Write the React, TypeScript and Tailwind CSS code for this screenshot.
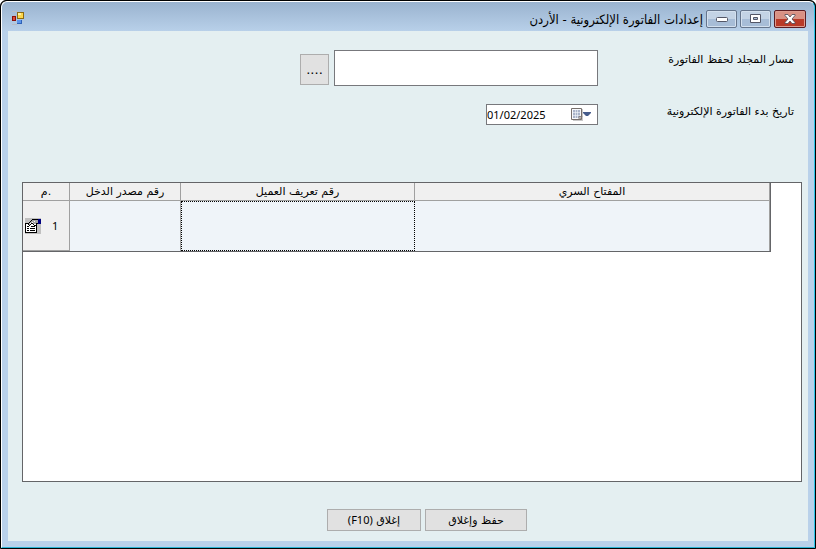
import { useState } from "react";

const columns = [
    { title: "م.", width: "w-[47px]" },
    { title: "رقم مصدر الدخل", width: "w-[111px]" },
    { title: "رقم تعريف العميل", width: "w-[234px]" },
    { title: "المفتاح السري", width: "" },
];

function AppIcon() {
    return (
        <svg width="16" height="16" viewBox="0 0 16 16" shapeRendering="crispEdges">
            <path d="M0 0h6v1H0zM2 4h3v1H2zM0 13h5v1H0z" fill="#b9bcc4" />
            <path d="M5 1h7v7H5z" fill="#8d6a10" />
            <path d="M6 2h5v5H6z" fill="#fbd64c" />
            <path d="M6 2h3v2H6z" fill="#fff0a0" />
            <path d="M0 5h4v5H0z" fill="#8c0f0a" />
            <path d="M1 6h2v3H1z" fill="#dc4a35" />
            <path d="M5 9h5v4H5z" fill="#2f62b8" />
            <path d="M5 9h4v3H5z" fill="#5b94ea" />
        </svg>
    );
}

function RowIcon() {
    return (
        <svg width="16" height="16" viewBox="0 0 16 16" shapeRendering="crispEdges">
            <path d="M0 0h16v16H0z" fill="#c0c0c0" />
            <path d="M0 5h12v10H0z" fill="#000" />
            <path d="M1 6h10v8H1z" fill="#fff" />
            <path d="M2 8h2v1H2zM6 8h4v1H6zM2 10h2v1H2zM5 10h5v1H5zM2 12h2v1H2zM5 12h5v1H5z" fill="#000" />
            <path d="M7 1h6v1H7zM6 2h1v1H6zM5 3h1v1H5zM4 4h1v1H4zM3 5h1v2H3zM4 7h1v1H4zM5 6h1v1H5zM6 5h2v1H6zM8 6h1v1H8zM9 7h2v1H9zM11 5h2v1h-2z" fill="#000" />
            <path d="M7 2h6v3H7zM6 3h1v2H6zM5 4h1v2H5zM4 5h1v2H4zM8 5h3v1H8z" fill="#a6a6a6" />
            <path d="M9 3h1v1H9zM7 4h1v1H7zM5 5h1v1H5z" fill="#fff" />
            <path d="M13 1h3v5h-3z" fill="#000080" />
        </svg>
    );
}

function CalendarIcon() {
    return (
        <svg width="21" height="13" viewBox="0 0 21 13">
            <path d="M1 1h11v12H2z" fill="#c9c9c9" />
            <path d="M.5.5h10v11H.5z" fill="#f8f9fc" stroke="#77706c" />
            <path d="M2 2h7v8H2z" fill="#a9b3c9" />
            <path d="M2 4.500h7M2 7.500h7M4.500 2v8M6.500 2v8" stroke="#f4f6fa" strokeWidth=".6" />
            <path d="M11 8.500l-3 3.500v-3.500z" fill="#ddd" stroke="#77706c" strokeWidth=".8" />
            <path d="M12 4h8v1l-3 3h-2l-3-3z" fill="#465c8b" />
        </svg>
    );
}

const captionButton = "flex h-[18px] w-[31px] items-center justify-center rounded-xs border border-[#65758c] bg-linear-to-b from-[#c3d3e5] from-50% to-[#a7bdd7] to-50% pt-0.5 shadow-[inset_0_0_0_1px_#d3e0ee]";
const dialogButton = "border border-[#adadad] bg-[#e1e1e1] hover:bg-[#e5f1fb]";

export default function App() {
    const [folder, setFolder] = useState("");
    const [startDate, setStartDate] = useState("01/02/2025");

    return (
        <div
            dir="rtl"
            lang="ar"
            className="flex min-h-screen flex-col overflow-hidden rounded-t-md border border-black bg-black text-black font-['DejaVu_Sans',sans-serif] text-[11px]"
        >
            <div className="flex flex-1 flex-col rounded-t-md border border-t-white border-r-[#2cc5e8] border-b-[#2cb4d4] border-l-white bg-[#b9d1ea] px-1.5 pb-1.5">
                {/* Title bar */}
                <header className="-mx-1.5 flex h-[29px] items-center rounded-t-md bg-linear-to-b from-[#9ab3cf] to-[#b8d0e9] px-2">
                    <div className="flex gap-[3px] pt-1">
                        <button
                            aria-label="إغلاق"
                            className="flex h-[18px] w-8 items-center justify-center rounded-xs border border-[#5c1c22] bg-linear-to-b from-[#d99184] from-50% to-[#b93a28] to-50% shadow-[inset_0_0_0_1px_#dd9c90]"
                        >
                            <svg width="12" height="10" viewBox="0 0 12 10">
                                <path d="M1 .5h3L6 3 8 .5h3v1L8 5l3 3.500v1H8L6 7 4 9.500H1v-1L4 5 1 1.500z" fill="#fff" stroke="#59535f" strokeWidth=".9" />
                            </svg>
                        </button>
                        <button aria-label="تكبير" className={captionButton}>
                            <svg width="11" height="9" viewBox="0 0 11 9" className="mb-0.5">
                                <path d="M.5.5h10v8H.5z" fill="#fff" stroke="#535666" />
                                <path d="M3.500 3.500h4v2h-4z" fill="#a9bdd5" stroke="#535666" />
                            </svg>
                        </button>
                        <button aria-label="تصغير" className={captionButton}>
                            <svg width="12" height="5" viewBox="0 0 12 5">
                                <rect x=".5" y=".5" width="11" height="4" rx="1" fill="#fff" stroke="#535666" />
                            </svg>
                        </button>
                    </div>
                    <h1 className="ps-[3px] pt-1.5 text-[13px] leading-4 font-['DejaVu_Sans_Condensed','DejaVu_Sans',sans-serif]">إعدادات الفاتورة الإلكترونية - الأردن</h1>
                    <div className="ms-auto me-0.5 pt-1">
                        <AppIcon />
                    </div>
                </header>

                <main className="flex flex-1 flex-col bg-[#e4eff1] pt-[19px] pb-2.5">
                    {/* Settings */}
                    <div className="flex flex-col gap-[18px] ps-3.5">
                        <div className="flex items-start">
                            <label htmlFor="folder" className="w-[196px] leading-5">مسار المجلد لحفظ الفاتورة</label>
                            <input
                                id="folder"
                                value={folder}
                                onChange={(e) => setFolder(e.target.value)}
                                className="h-9 w-[264px] border border-[#77787c] bg-white px-1 outline-none"
                            />
                            <button className={`${dialogButton} ms-[5px] mt-1 h-[31px] w-[29px] text-[13px]`}>....</button>
                        </div>
                        <div className="flex items-start">
                            <label htmlFor="startDate" className="w-[196px] leading-4">تاريخ بدء الفاتورة الإلكترونية</label>
                            <div dir="ltr" className="flex h-[21px] w-[112px] items-center border border-[#77787c] bg-white">
                                <input
                                    id="startDate"
                                    value={startDate}
                                    onChange={(e) => setStartDate(e.target.value)}
                                    className="w-0 flex-1 pt-px font-['Noto_Sans',sans-serif] outline-none"
                                />
                                <button aria-label="التقويم" className="pe-[5px]">
                                    <CalendarIcon />
                                </button>
                            </div>
                        </div>
                    </div>

                    {/* Keys grid */}
                    <div dir="ltr" className="mt-[57px] mr-1.5 ml-3.5 flex-1 border border-[#646568] bg-white pr-[30px]">
                        <table className="w-full table-fixed border-separate border-spacing-0 border-r border-b border-[#646568]">
                            <thead>
                                <tr className="h-[18px] bg-[#f0f0f0]">
                                    {columns.map((col) => (
                                        <th key={col.title} className={`${col.width} border-r border-b border-[#a0a0a0] p-0 pt-px text-center leading-4 font-normal`}>
                                            {col.title}
                                        </th>
                                    ))}
                                </tr>
                            </thead>
                            <tbody>
                                <tr className="h-[50px] bg-[#eff4f9]">
                                    <th scope="row" className="border-r border-b border-[#a0a0a0] bg-[#f0f0f0] p-0 font-normal">
                                        <span className="flex items-center gap-[11px] pt-px pl-0.5 font-['Noto_Sans',sans-serif]">
                                            <RowIcon />1
                                        </span>
                                    </th>
                                    <td className="border-r border-[#a0a0a0]"></td>
                                    <td className="border border-dotted border-black"></td>
                                    <td className="border-r border-[#a0a0a0]"></td>
                                </tr>
                            </tbody>
                        </table>
                    </div>

                    {/* Actions */}
                    <footer className="mt-[27px] flex justify-center gap-1 pe-[38px]">
                        <button className={`${dialogButton} h-[22px] w-[102px] pt-0.5`}>حفظ وإغلاق</button>
                        <button className={`${dialogButton} h-[22px] w-[94px] pt-0.5`}>
                            إغلاق <span className="font-['Noto_Sans',sans-serif]">(F10)</span>
                        </button>
                    </footer>
                </main>
            </div>
        </div>
    );
}
